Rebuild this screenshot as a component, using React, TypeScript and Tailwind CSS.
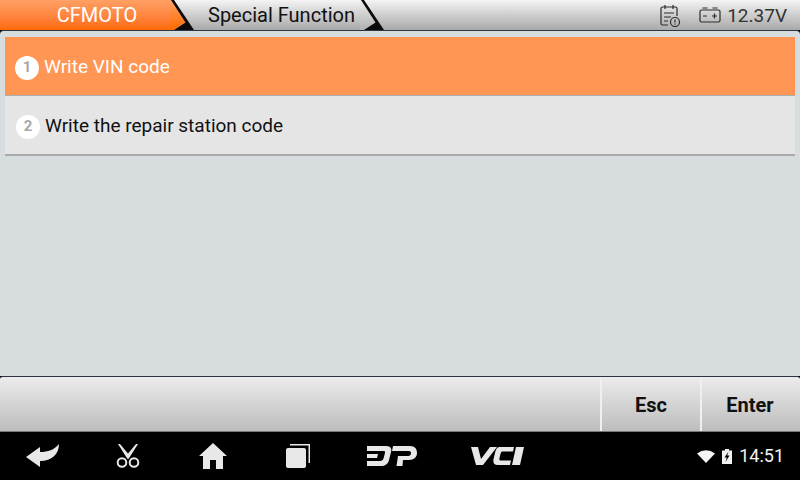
function TabEdge({ id, from, to }: { id: string; from: string; to: string }) {
  return (
    <svg width="24" height="30" viewBox="0 0 24 30" className="shrink-0">
      <defs>
        <linearGradient id={id} x1="0" y1="0" x2="0" y2="1">
          <stop offset="0" stopColor={from} />
          <stop offset="1" stopColor={to} />
        </linearGradient>
      </defs>
      <polygon points="0,0 2,0 16,22 4,30 0,30" fill={`url(#${id})`} />
      <polygon points="1,0 4,0 24,30 4,30 15.5,22.5" fill="#0b0b0b" />
    </svg>
  );
}

function RowBadge({ n }: { n: number }) {
  return (
    <span className="flex h-[24px] w-[24px] shrink-0 items-center justify-center rounded-full bg-white text-[15px] font-bold text-[#a8a8a8]">
      {n}
    </span>
  );
}

function CalendarIcon() {
  return (
    <svg width="22" height="24" viewBox="0 0 22 24" fill="none" stroke="#2c2c2c" strokeWidth="1.2">
      <path d="M9 22H3.500A1.500 1.500 0 0 1 2 20.500V5.500A1.500 1.500 0 0 1 3.500 4H16.500A1.500 1.500 0 0 1 18 5.500V13" />
      <path d="M6 2v4M14 2v4M5 10h10M5 14h7M5 18h4" />
      <circle cx="16" cy="19" r="4.500" />
      <path d="M16 16.500v3M16 20.500v1" />
    </svg>
  );
}

function BatteryIcon() {
  return (
    <svg width="22" height="18" viewBox="0 0 22 18" fill="none" stroke="#2c2c2c" strokeWidth="1.2">
      <rect x="1" y="4" width="20" height="12" rx="1.500" />
      <path d="M3.500 2h5M13.500 2h5M4 10h4M13 10h5M15.500 7.500v5" />
    </svg>
  );
}

function BackIcon() {
  return (
    <svg width="34" height="24" viewBox="0 0 34 24" fill="#e8e8e8">
      <path d="M0 13 L14 3 L14 8 C22 8 28 6 33 0 C33 10 26 17 14 17 L14 23 Z" />
    </svg>
  );
}

function ScissorsIcon() {
  return (
    <svg width="26" height="24" viewBox="0 0 26 24" fill="none" stroke="#e8e8e8">
      <polygon points="3,0 5,0 15,12 12.500,15" fill="#e8e8e8" stroke="none" />
      <polygon points="23,0 21,0 11,12 13.500,15" fill="#e8e8e8" stroke="none" />
      <circle cx="7" cy="18.500" r="4.300" strokeWidth="2" />
      <circle cx="19" cy="18.500" r="4.300" strokeWidth="2" />
    </svg>
  );
}

function HomeIcon() {
  return (
    <svg width="30" height="26" viewBox="0 0 30 26" fill="#e8e8e8">
      <path d="M15 0 L29 13 L25 13 L25 26 L18 26 L18 17 L12 17 L12 26 L5 26 L5 13 L1 13 Z" />
    </svg>
  );
}

function RecentIcon() {
  return (
    <svg width="26" height="26" viewBox="0 0 26 26" fill="#e8e8e8">
      <rect x="1" y="5" width="20" height="20" rx="2" />
      <path d="M5 2.500 V1 H25 V20 H23.500 V2.500 Z" />
    </svg>
  );
}

function DpIcon() {
  return (
    <svg width="50" height="20" viewBox="0 0 50 20" fill="#e8e8e8">
      <path d="M0 0 H19 C24 0 25 3 24 6 L22 14 C21 18 18 20 14 20 H0 V15 H13 C15 15 16 14 16.500 12.500 L18 7 C18.400 5.500 18 5 16 5 H0 Z" />
      <path d="M0 8 H11 L10 12 H0 Z" />
      <path d="M26 0 H43 C48 0 50 3 50 7 C50 11 47 14 42 14 H36 L35.500 20 H29.500 L31 10 H41 C43.500 10 44 8.500 44 7 C44 5.500 43 5 41 5 H25 Z" />
    </svg>
  );
}

function VciIcon() {
  return (
    <svg width="54" height="18" viewBox="0 0 54 18" fill="#e8e8e8">
      <path d="M0 0 H7 L10 12 L19 0 H26 L12 18 H5 Z" />
      <path d="M29 0 H43 L42 4.500 H32 C30.500 4.500 30 5 29.500 7 L28.500 11 C28 13 28.500 13.500 30 13.500 H40 L39 18 H26 C22.500 18 22 15 22.500 12 L24 6 C25 2 26 0 29 0 Z" />
      <path d="M45 0 H53 L49 18 H41 Z" />
    </svg>
  );
}

function WifiIcon() {
  return (
    <svg width="18" height="13" viewBox="0 0 18 13" fill="#f5f5f5">
      <path d="M0 3.500 Q9 -3 18 3.500 L9 13 Z" />
    </svg>
  );
}

function ChargingBattery() {
  return (
    <svg width="10" height="15" viewBox="0 0 10 15">
      <path d="M3 0h4v1.500h3V15H0V1.500h3Z" fill="#f2f2f2" />
      <path d="M6.500 2.500 L2.500 8.500 H4.800 L3.500 13 L7.500 6.500 H5.200 Z" fill="#000" />
    </svg>
  );
}

export default function App() {
  return (
    <div style={{ fontFamily: "Roboto, sans-serif" }} className="flex h-[480px] w-[800px] flex-col overflow-hidden bg-black">
      {/* title bar */}
      <div className="flex h-[30px] shrink-0 items-stretch bg-gradient-to-b from-[#f4f4f4] to-[#a9a9a9]">
        <div className="flex w-[170px] shrink-0 items-center justify-center bg-gradient-to-b from-[#ffa064] to-[#ff6a00] pl-[24px] text-[20px] leading-none text-white">
          CFMOTO
        </div>
        <TabEdge id="tab-orange" from="#ffa064" to="#ff6a00" />
        <div className="flex w-[166px] shrink-0 items-center justify-center pl-[9px] text-[20px] leading-none text-[#111]">
          Special Function
        </div>
        <TabEdge id="tab-grey" from="#eeeeee" to="#b0b0b0" />
        <div className="flex flex-1 items-center justify-end gap-[8px] pr-[13px] text-[19px] leading-none text-[#333]">
          <CalendarIcon />
          <span className="ml-[10px]"><BatteryIcon /></span>
          <span className="-ml-[2px]">12.37V</span>
        </div>
      </div>

      {/* list panel */}
      <div className="h-[346px] shrink-0 rounded-t-[4px] border-t border-[#2e3440] bg-[#d7dcdf] px-[5px] pt-[6px]">
        <div className="flex h-[59px] items-center gap-[5px] border-b border-[#a9adb0] bg-[#ff9653] pl-[10px] pt-[3px] text-[19px] text-white">
          <RowBadge n={1} />
          <span>Write VIN code</span>
        </div>
        <div className="flex h-[60px] items-center gap-[5px] border-b-2 border-[#a9a9a9] bg-[#e5e5e5] pl-[11px] pt-[3px] text-[19px] text-[#111]">
          <RowBadge n={2} />
          <span>Write the repair station code</span>
        </div>
      </div>

      {/* action bar */}
      <div className="flex h-[56px] shrink-0 items-stretch rounded-t-[3px] border-y border-t-[#2e3440] border-b-[#777] bg-gradient-to-b from-[#ececec] to-[#bdbdbd] text-[20px] font-bold text-[#111]">
        <div className="flex-1" />
        <div className="flex w-[100px] items-center justify-center border-l-2 border-[#f0f0f0] pt-[2px]">Esc</div>
        <div className="flex w-[100px] items-center justify-center border-l-2 border-[#f0f0f0] pr-[2px] pt-[2px]">Enter</div>
      </div>

      {/* android nav */}
      <div className="flex flex-1 items-center justify-between bg-black pr-[16px]">
        <div className="flex items-center">
          <span className="ml-[26px]"><BackIcon /></span>
          <span className="ml-[55px]"><ScissorsIcon /></span>
          <span className="ml-[57px]"><HomeIcon /></span>
          <span className="ml-[57px]"><RecentIcon /></span>
          <span className="ml-[56px]"><DpIcon /></span>
          <span className="ml-[54px]"><VciIcon /></span>
        </div>
        <div className="flex items-center gap-[7px] text-[18px] leading-none text-[#f2f2f2]">
          <WifiIcon />
          <ChargingBattery />
          <span>14:51</span>
        </div>
      </div>
    </div>
  );
}
